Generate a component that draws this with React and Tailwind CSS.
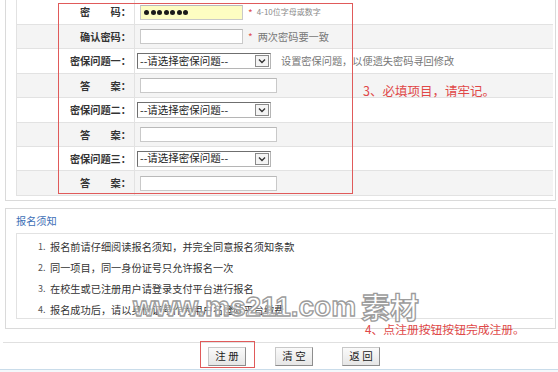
import React from "react";

function Select() {
  return (
    <div className="ml-[2px] flex h-[16px] w-[134px] items-center border border-[#6f6f6f] border-r-[#b5b5b5] border-b-[#b5b5b5] bg-white">
      <span className="flex-1 pl-[2px] text-[10.5px] leading-none text-[#222]">--请选择密保问题--</span>
      <span className="mr-[1px] flex h-[12px] w-[14px] items-center justify-center border border-[#8a8a8a] bg-[#f4f4f4]">
        <svg width="8" height="6" viewBox="0 0 8 6">
          <path d="M1 1.5 L4 4.5 L7 1.5" fill="none" stroke="#333" strokeWidth="1.4" />
        </svg>
      </span>
    </div>
  );
}

function Input({ w = 103, yellow = false, children }) {
  return (
    <div
      className={`ml-[5px] flex h-[15px] items-center border border-[#c9c9c9] border-t-[#b9b9b9] ${
        yellow ? "bg-[#fdfdc2]" : "bg-white"
      }`}
      style={{ width: w }}
    >
      {children}
    </div>
  );
}

function Dots() {
  return (
    <div className="flex items-center gap-[1.5px] pl-[3px]">
      {[0, 1, 2, 3, 4, 5, 6].map((i) => (
        <span key={i} className="block h-[5px] w-[5px] rounded-full bg-[#1a1a1a]" />
      ))}
    </div>
  );
}

const rows = [
  {
    label: "密\u3000\u3000码：",
    h: "h-[25px]",
    gray: false,
    content: (
      <>
        <Input yellow>
          <Dots />
        </Input>
        <span className="ml-[5px] text-[10px] text-[#e05050]">*</span>
        <span className="ml-[4px] text-[8px] text-[#8a8a8a]">4-10位字母或数字</span>
      </>
    ),
  },
  {
    label: "确认密码：",
    h: "h-[24px]",
    gray: true,
    content: (
      <>
        <Input />
        <span className="ml-[5px] text-[10px] text-[#e05050]">*</span>
        <span className="ml-[5px] text-[10.2px] text-[#777]">两次密码要一致</span>
      </>
    ),
  },
  {
    label: "密保问题一：",
    h: "h-[25px]",
    gray: false,
    content: (
      <>
        <Select />
        <span className="ml-[10px] text-[10.2px] text-[#777]">设置密保问题，以便遗失密码寻回修改</span>
      </>
    ),
  },
  { label: "答\u3000\u3000案：", h: "h-[24px]", gray: true, content: <Input w={137} /> },
  { label: "密保问题二：", h: "h-[25px]", gray: false, content: <Select /> },
  { label: "答\u3000\u3000案：", h: "h-[24px]", gray: true, content: <Input w={137} /> },
  { label: "密保问题三：", h: "h-[24px]", gray: false, content: <Select /> },
  { label: "答\u3000\u3000案：", h: "h-[25px]", gray: true, content: <Input w={137} /> },
];

const notes = [
  "报名前请仔细阅读报名须知，并完全同意报名须知条款",
  "同一项目，同一身份证号只允许报名一次",
  "在校生或已注册用户请登录支付平台进行报名",
  "报名成功后，请以身份证号作为用户名登陆平台缴费",
];

function Btn({ children }) {
  return (
    <div className="flex h-[19px] w-[38px] items-center justify-center border border-[#8d8d8d] border-t-[#c8c8c8] border-l-[#c8c8c8] bg-gradient-to-b from-[#fafafa] to-[#e6e6e6] text-[10.5px] text-[#222]">
      {children}
    </div>
  );
}

export default function App() {
  return (
    <div className="relative h-[372px] w-[558px] overflow-hidden bg-white font-['Noto_Sans_CJK_SC','Noto_Sans',sans-serif] text-[#333]">
      {/* form box */}
      <div className="ml-[5px] mr-[2px] h-[201px] border-x border-b border-[#dadada] pl-[10px] pr-[2px]">
        <div className="border-l border-[#e2e2e2]">
          {rows.map((r, i) => (
            <div
              key={i}
              className={`flex items-center border-b border-[#e2e2e2] ${r.h} ${r.gray ? "bg-[#f4f4f4]" : "bg-white"}`}
            >
              <div className="flex h-full w-[118px] items-center justify-end border-r border-[#e2e2e2] pr-[3px] text-[10.2px] font-bold text-[#333]">
                {r.label}
              </div>
              <div className="flex items-center">{r.content}</div>
            </div>
          ))}
        </div>
      </div>

      {/* notice box */}
      <div className="ml-[5px] mr-[2px] mt-[7px] h-[121px] border border-[#dadada] pl-[10px] pr-[2px]">
        <div className="flex h-[24px] items-center text-[10.2px] text-[#3d6fb6]">报名须知</div>
        <div className="h-[86px] border-l border-t border-b border-[#e2e2e2] pt-[2px]">
          {notes.map((n, i) => (
            <div key={i} className="flex h-[21px] items-center text-[10.2px] text-[#333]">
              <span className="w-[33px] pl-[21px] text-[9px] text-[#555]">{i + 1}.</span>
              <span>{n}</span>
            </div>
          ))}
        </div>
      </div>

      {/* buttons */}
      <div className="ml-[3px] mt-[13px] flex h-[27px] items-center gap-[29px] border-t border-[#e0e0e0] pl-[205px]">
        <Btn>注 册</Btn>
        <Btn>清 空</Btn>
        <Btn>返 回</Btn>
      </div>
      <div className="h-[3px] border-t border-[#c9dcea] bg-[#f4f8fb]" />

      {/* annotations */}
      <div className="pointer-events-none absolute left-[58px] top-[3px] h-[191px] w-[295px] border border-[#e05a5a]" />
      <div className="pointer-events-none absolute left-[200px] top-[341px] h-[27px] w-[55px] border border-[#e05a5a]" />
      <div className="absolute left-[363px] top-[85px] text-[12.5px] leading-none text-[#e04848]">3、必填项目，请牢记。</div>

      {/* watermark */}
      <div className="pointer-events-none absolute left-[133px] top-[292px] flex items-end whitespace-nowrap text-white/60 [-webkit-text-stroke:1.3px_#9c9c9c]">
        <span className="font-['Liberation_Sans',sans-serif] text-[28px] font-bold leading-none">www.ms211.com</span>
        <span className="ml-[5px] text-[29px] font-bold leading-none">素材</span>
      </div>

      <div className="absolute left-[365px] top-[323px] text-[11.8px] leading-none text-[#e04848]">4、点注册按钮按钮完成注册。</div>
    </div>
  );
}
